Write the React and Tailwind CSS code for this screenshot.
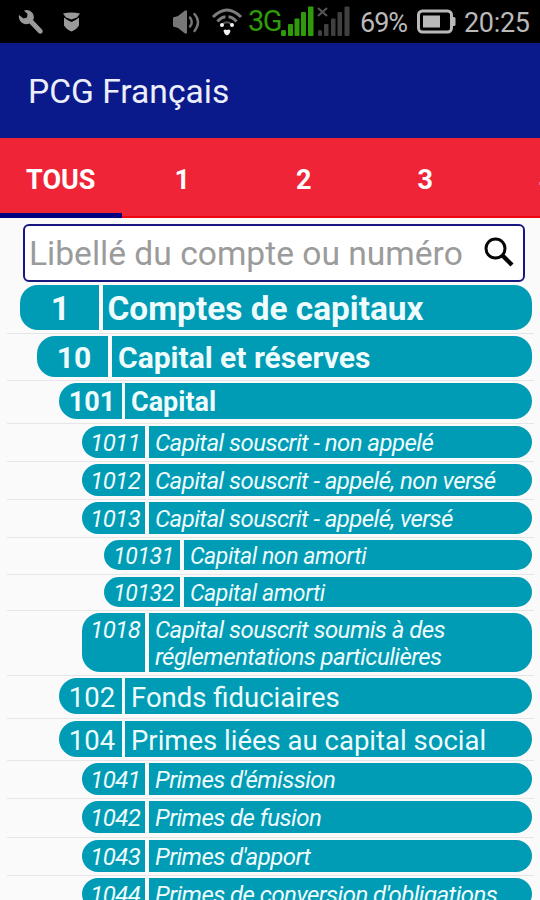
import React from 'react';
import clsx from 'clsx';

const TABS = ['TOUS', '1', '2', '3', '4'];

const ACCOUNTS = [
  { code: '1', label: 'Comptes de capitaux', level: 1 },
  { code: '10', label: 'Capital et réserves', level: 2 },
  { code: '101', label: 'Capital', level: 3, bold: true },
  { code: '1011', label: 'Capital souscrit - non appelé', level: 4 },
  { code: '1012', label: 'Capital souscrit - appelé, non versé', level: 4 },
  { code: '1013', label: 'Capital souscrit - appelé, versé', level: 4 },
  { code: '10131', label: 'Capital non amorti', level: 5 },
  { code: '10132', label: 'Capital amorti', level: 5 },
  { code: '1018', label: 'Capital souscrit soumis à des réglementations particulières', level: 4, tall: true },
  { code: '102', label: 'Fonds fiduciaires', level: 3 },
  { code: '104', label: 'Primes liées au capital social', level: 3 },
  { code: '1041', label: "Primes d'émission", level: 4 },
  { code: '1042', label: 'Primes de fusion', level: 4 },
  { code: '1043', label: "Primes d'apport", level: 4 },
  { code: '1044', label: "Primes de conversion d'obligations", level: 4 },
];

// indent, bar height, type size and code column for each depth of the chart
const LEVELS = {
  1: { row: 'pl-[13px]', bar: 'h-[45px] gap-[4px] text-[33.4px] leading-[47px] font-bold', code: 'w-[78.5px] pl-[2px]', label: 'pl-[5px]' },
  2: { row: 'pl-[30px]', bar: 'h-[41px] gap-[4px] text-[30px] leading-[43px] font-bold', code: 'w-[71px] pl-[3px]', label: 'pl-[6px]' },
  3: { row: 'pl-[52px]', bar: 'h-[36px] gap-[3px] leading-[39px]', code: 'w-[63px] pl-[3px]', label: 'pl-[6px]' },
  4: { row: 'pl-[74.5px]', bar: 'gap-[4px] text-[24px] leading-[27px] italic tracking-[-0.55px]', code: 'w-[63.5px] pl-[4px] pt-[4px]', label: 'pl-[6px] pt-[4px]' },
  5: { row: 'pl-[97px]', bar: 'h-[30px] gap-[4px] text-[23px] leading-[33px] italic tracking-[-0.4px]', code: 'w-[76px] pl-[3px]', label: 'pl-[6px]' },
};

function App() {
  return (
    <div className="h-[900px] w-[540px] overflow-hidden bg-[#fafafa] font-['Roboto',sans-serif] flex flex-col">
      <StatusBar />

      {/* APP BAR */}
      <header className="h-[95px] shrink-0 bg-[#0b1a8b] flex items-center pl-[28px] pt-[2px]">
        <h1 className="text-[33.6px] leading-none text-[#eceefa] whitespace-nowrap">PCG Français</h1>
      </header>

      {/* TABS */}
      <nav className="h-[80px] shrink-0 bg-[#ef2537] border-b-2 border-[#f00511] flex">
        {TABS.map((t, i) => (
          <button
            key={t}
            className={clsx(
              'w-[121.5px] h-[80px] shrink-0 pt-[4px] text-[27px] font-bold text-white',
              i === 0 && 'shadow-[inset_0_-5px_0_#000080]'
            )}
          >
            {t}
          </button>
        ))}
      </nav>

      {/* SEARCH */}
      <div className="mt-[6px] ml-[23px] h-[58px] w-[502px] shrink-0 rounded-[6px] border-2 border-[#17177e] bg-white flex items-center justify-between pl-[4px] pr-[8px]">
        <span className="pt-px text-[33.6px] leading-none text-[#9b9b9b] whitespace-nowrap">Libellé du compte ou numéro</span>
        <svg width="34" height="34" viewBox="0 0 34 34" fill="none" stroke="#050505">
          <circle cx="14.500" cy="12.500" r="9.500" strokeWidth="3" />
          <path d="M21 19 L31 29" strokeWidth="4.400" />
        </svg>
      </div>

      {/* ACCOUNT LIST */}
      <ul className="pt-[0.7px] pl-[7px] pr-[6px]">
        {ACCOUNTS.map((a) => (
          <AccountRow key={a.code} {...a} />
        ))}
      </ul>
    </div>
  );
}

const AccountRow = ({ code, label, level, bold, tall }) => {
  const s = LEVELS[level];
  return (
    <li className={clsx('pt-[2px] pb-[3.3px] pr-[2px] border-b border-[#e6e6e6]', s.row)}>
      <div
        className={clsx(
          'flex overflow-hidden rounded-[18px] text-[#effcfd]',
          s.bar,
          level === 4 && (tall ? 'h-[59px]' : 'h-[32px]'),
          level === 3 && (bold ? 'text-[27px] font-bold' : 'text-[27.5px]')
        )}
      >
        <div className={clsx('shrink-0 bg-[#009bb4] text-center', s.code)}>{code}</div>
        <div className={clsx('flex-1 bg-[#009bb4]', s.label, tall ? 'pr-[80px]' : 'whitespace-nowrap')}>{label}</div>
      </div>
    </li>
  );
};

const StatusBar = () => (
  <div className="h-[43px] shrink-0 bg-black flex items-center text-[#b9b9b9]">
    <svg className="ml-[18px]" width="26" height="26" viewBox="0 0 26 26" fill="#9a9a9a">
      <path d="M6 1.500Q11-.500 14.500 4 17 8 15 11L24 20.500Q25.500 22.500 24 24 22.500 25.500 20.500 24L11.500 14.500Q7 16.500 3.500 13.500 0 10 1 6L5.500 9.500 9 8.500 9.500 5z" />
    </svg>
    <svg className="ml-[19px]" width="17" height="20" viewBox="0 0 17 20" fill="#9a9a9a">
      <path d="M0 1.500Q8.500-.500 17 1.500L14 5.500 8.500 7.500 3 5.500z" />
      <path d="M1 5.500 4.500 8 8.500 10 12.500 8 16 5.500V13.500Q13 18 8.500 19.500 4 18 1 13.500z" />
    </svg>
    <svg className="ml-[92px]" width="29" height="26" viewBox="0 0 29 26" fill="none" stroke="#777" strokeWidth="2.400">
      <path d="M1 8.500 6 7 13 1.500H15V24.500H13L6 19 1 17.500z" fill="#777" stroke="none" />
      <path d="M18 8.500Q21.500 13 18 17.500M22.500 5Q29.500 13 22.500 22" strokeLinecap="round" />
    </svg>
    <svg className="ml-[10px]" width="32" height="28" viewBox="0 0 32 28" fill="none" stroke="#7d7d7d" strokeWidth="3">
      <path d="M2 9Q16-5 30 9" />
      <path d="M6.500 13.500Q11 8.500 14.500 9M17.500 9Q21 8.500 25.500 13.500" />
      <path d="M12 16Q16 12.500 20 16" stroke="#555" strokeWidth="2" />
      <g fill="#f2f2f2" stroke="none">
        <circle cx="11" cy="17" r="2" />
        <circle cx="21" cy="17" r="2" />
        <path d="M12.500 23Q13 20.500 16 22 19 20.500 19.500 23 19 26 16 27.500 13 26 12.500 23z" />
      </g>
    </svg>
    <span className="ml-[5px] w-[33px] text-[29px] leading-none tracking-[-1.5px] text-[#2f9a0a]">3G</span>
    <svg width="70" height="32" viewBox="0 0 70 32">
      <g fill="#2f9a0a">
        <rect x="0" y="24" width="5" height="6" rx="1.500" />
        <rect x="7" y="18" width="5" height="12" rx="1" />
        <rect x="13.500" y="12.500" width="5" height="17.500" rx="1" />
        <rect x="20" y="6" width="5" height="24" rx="1" />
        <rect x="27" y="0.500" width="5.500" height="29.500" rx="1" />
      </g>
      <g fill="#404040">
        <rect x="37" y="24" width="4" height="6" rx="1.500" />
        <rect x="43" y="18" width="4.500" height="12" rx="1" />
        <rect x="50" y="12.500" width="4.500" height="17.500" rx="1" />
        <rect x="56.500" y="6" width="4.500" height="24" rx="1" />
        <rect x="63.500" y="0.500" width="5" height="29.500" rx="1" />
      </g>
      <path d="M37 2 46 10M46 2 37 10" stroke="#555" strokeWidth="2.200" />
    </svg>
    <span className="ml-[9px] w-[57px] pt-[3px] text-[27px] leading-none tracking-[-1px]">69%</span>
    <svg width="39" height="25" viewBox="0 0 39 25">
      <rect x="1.500" y="2" width="33" height="21" rx="4" fill="none" stroke="#b9b9b9" strokeWidth="3" />
      <rect x="6" y="6.500" width="17" height="12" fill="#b9b9b9" />
      <path d="M35 8h2q1.500 0 1.500 1.500v6q0 1.500-1.500 1.500h-2z" fill="#b9b9b9" />
    </svg>
    <span className="ml-[8px] pt-[3px] text-[27px] leading-none tracking-[-0.3px]">20:25</span>
  </div>
);

export default App;
